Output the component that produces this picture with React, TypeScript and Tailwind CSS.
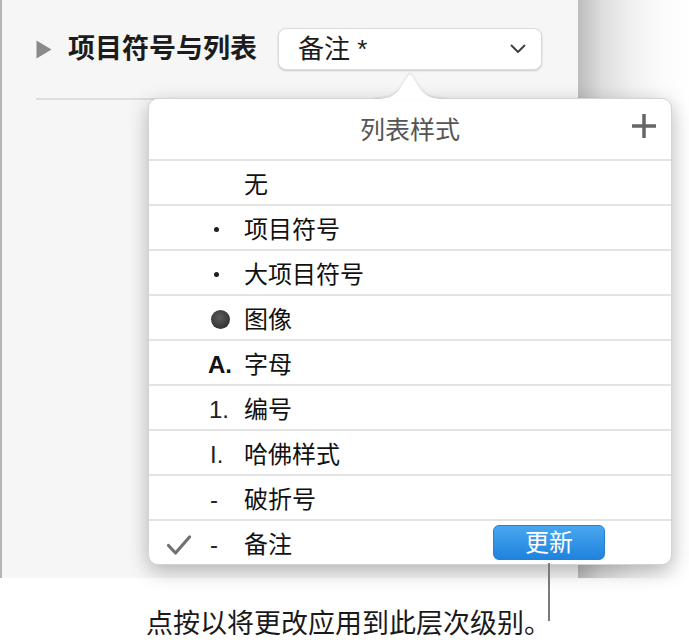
type Marker = 'none' | 'dot' | 'image' | 'alpha' | 'number' | 'roman' | 'dash';

type ListStyle = {
  label: string;
  marker: Marker;
  selected?: boolean;
};

const styles: ListStyle[] = [
  { label: '无', marker: 'none' },
  { label: '项目符号', marker: 'dot' },
  { label: '大项目符号', marker: 'dot' },
  { label: '图像', marker: 'image' },
  { label: '字母', marker: 'alpha' },
  { label: '编号', marker: 'number' },
  { label: '哈佛样式', marker: 'roman' },
  { label: '破折号', marker: 'dash' },
  { label: '备注', marker: 'dash', selected: true },
];

const MarkerGlyph = ({ marker }: { marker: Marker }) => {
  switch (marker) {
    case 'dot':
      return <span className="ml-[6px] block w-[5px] h-[5px] rounded-full bg-[#1e1e1e]" />;
    case 'image':
      return (
        <span className="ml-[3px] block w-[19px] h-[19px] rounded-full bg-[radial-gradient(circle_at_45%_40%,#5c5c5c,#3a3a3a_60%,#2a2a2a)]" />
      );
    case 'alpha':
      return <span className="text-[24px] leading-none font-bold text-[#111]">A.</span>;
    case 'number':
      return <span className="ml-[1px] text-[24px] leading-none text-[#222]">1.</span>;
    case 'roman':
      return <span className="ml-[2px] text-[24px] leading-none text-[#222]">I.</span>;
    case 'dash':
      return <span className="ml-[2px] text-[24px] leading-none text-[#222]">-</span>;
    default:
      return null;
  }
};

const CheckIcon = () => (
  <svg width="24" height="20" viewBox="0 0 24 20" fill="none">
    <path d="M1.5 10.5 L8.5 18 L22.5 2" stroke="#727272" strokeWidth="3.2" strokeLinecap="round" strokeLinejoin="round" />
  </svg>
);

const App = () => {
  return (
    <div className="relative w-[689px] h-[644px] overflow-hidden bg-white font-['Liberation_Sans','Noto_Sans_CJK_SC',sans-serif]">
      {/* Inspector panel + shadow of the canvas edge */}
      <div className="flex h-[578px]">
        <div className="w-[578px] h-full bg-[#f6f6f6] border-l-2 border-[#b4b4b4] pt-[28px] pl-[34px]">
          <div className="flex items-center h-[42px]">
            <svg width="16" height="19" viewBox="0 0 16 19">
              <path d="M0.5 0.5 L15.5 9.5 L0.5 18.5 Z" fill="#8a8a8a" />
            </svg>
            <span className="ml-[16px] text-[27px] leading-none font-bold text-[#1c1c1c]">项目符号与列表</span>
            <div className="ml-[21px] flex items-center justify-between w-[264px] h-[42px] rounded-[8px] bg-white border border-[#dadada] shadow-[0_1px_2px_rgba(0,0,0,0.18)] pl-[19px] pr-[15px]">
              <span className="text-[26px] leading-none text-[#1c1c1c]">备注 *</span>
              <svg width="16" height="10" viewBox="0 0 16 10" fill="none">
                <path d="M1.5 1.5 L8 8 L14.5 1.5" stroke="#3c3c3c" strokeWidth="1.8" strokeLinecap="round" strokeLinejoin="round" />
              </svg>
            </div>
          </div>
          <div className="mt-[28px] h-[2px] bg-[#dedede]" />
        </div>
        <div className="flex-1 h-full bg-[linear-gradient(to_right,#bcbcbc,#dedede_22%,#f1f1f1_50%,#fbfbfb_75%,#ffffff)]" />
      </div>

      {/* Caption */}
      <p className="mt-[30px] pl-[146px] text-[27px] leading-[32px] text-[#1a1a1a]">点按以将更改应用到此层次级别。</p>

      {/* Popover arrow */}
      <svg
        className="absolute left-[375px] top-[72px] z-20 drop-shadow-[0_-1px_1px_rgba(0,0,0,0.12)]"
        width="70"
        height="28"
        viewBox="0 0 70 28"
      >
        <path d="M0 28 L0 27 C12 27 18 25 24 18 L33 4 Q35 1 37 4 L46 18 C52 25 58 27 70 27 L70 28 Z" fill="#ffffff" />
      </svg>

      {/* List style popover */}
      <div className="absolute left-[148px] top-[98px] z-10 w-[524px] h-[467px] rounded-[10px] bg-white border border-[#d4d4d4] shadow-[0_6px_20px_rgba(0,0,0,0.28)] overflow-hidden">
        <div className="relative flex items-center justify-center h-[60px] pt-[2px]">
          <span className="text-[25px] leading-none text-[#555]">列表样式</span>
          <svg className="absolute right-[14px] top-[14px]" width="26" height="26" viewBox="0 0 26 26">
            <path d="M13 1 V25 M1 13 H25" stroke="#666" strokeWidth="3.5" />
          </svg>
        </div>
        {styles.map((s) => (
          <div key={s.label} className="flex items-center h-[45px] border-t-2 border-[#e3e3e3] pl-[18px] pt-[4px]">
            <div className="w-[41px] flex items-center">{s.selected && <CheckIcon />}</div>
            <div className="w-[36px] flex items-center">
              <MarkerGlyph marker={s.marker} />
            </div>
            <span className="text-[24px] leading-none text-[#111]">{s.label}</span>
            {s.selected && (
              <button className="ml-auto mr-[66px] mb-[4px] w-[112px] h-[35px] rounded-[6px] border border-[#2a7fd0] bg-[linear-gradient(to_bottom,#4aa6ef,#1f83dd)] text-[24px] leading-none text-white">
                更新
              </button>
            )}
          </div>
        ))}
      </div>

      {/* Callout line */}
      <div className="absolute left-[548px] top-[563px] z-20 w-[2px] h-[58px] bg-[#7a7a7a]" />
    </div>
  );
};

export default App;
